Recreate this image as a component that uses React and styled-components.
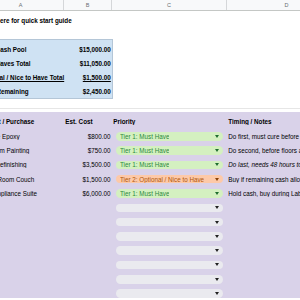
import styled, { createGlobalStyle } from "styled-components";

const COLS = "86px 48px 115px 120px";

const ITEMS = [
  { item: "Garage Epoxy", cost: "$800.00", tier: 1, note: "Do first, must cure before floors" },
  { item: "Bedroom Painting", cost: "$750.00", tier: 1, note: "Do second, before floors are done" },
  { item: "Floor Refinishing", cost: "$3,500.00", tier: 1, note: "Do last, needs 48 hours to cure", italic: true },
  { item: "Living Room Couch", cost: "$1,500.00", tier: 2, note: "Buy if remaining cash allows" },
  { item: "New Appliance Suite", cost: "$6,000.00", tier: 1, note: "Hold cash, buy during Labor Day" },
];

const EMPTY_ROWS = 7;

const TIERS = {
  0: { label: "", bg: "#eaeaef", fg: "#222", arrow: "#222" },
  1: { label: "Tier 1: Must Have", bg: "#d4f0c0", fg: "#2b8a3e", arrow: "#1f6e2f" },
  2: { label: "Tier 2: Optional / Nice to Have", bg: "#fdc9a8", fg: "#b0560a", arrow: "#8a4208" },
};

const GlobalStyle = createGlobalStyle`
  body {
    margin: 0;
    font-family: "Liberation Sans", Arial, sans-serif;
    overflow: hidden;
  }
`;

export default function App() {
  return (
    <>
      <GlobalStyle />
      <Viewport>
        <Sheet>
          <ColumnHeaders>
            {["A", "B", "C", "D"].map((l) => (
              <ColumnLetter key={l}>{l}</ColumnLetter>
            ))}
          </ColumnHeaders>

          <TitleRow>Click here for quick start guide</TitleRow>

          <SummaryBox>
            <SummaryRow label="Total Cash Pool" value="$15,000.00" />
            <SummaryRow label="Must Haves Total" value="$11,050.00" />
            <SummaryRow label="Optional / Nice to Have Total" value="$1,500.00" underline />
            <SummaryRow label="Cash Remaining" value="$2,450.00" />
          </SummaryBox>

          <Divider />

          <PlanSection>
            <PlanRow>
              <HeaderCell>Project / Purchase</HeaderCell>
              <HeaderCell>Est. Cost</HeaderCell>
              <HeaderCell>Priority</HeaderCell>
              <HeaderCell>Timing / Notes</HeaderCell>
            </PlanRow>
            {ITEMS.map((row) => (
              <PlanRow key={row.item}>
                <TextCell>{row.item}</TextCell>
                <CostCell>{row.cost}</CostCell>
                <PriorityCell>
                  <Dropdown tier={row.tier} />
                </PriorityCell>
                <TextCell $italic={row.italic}>{row.note}</TextCell>
              </PlanRow>
            ))}
            {Array.from({ length: EMPTY_ROWS }).map((_, i) => (
              <PlanRow key={i}>
                <TextCell />
                <CostCell />
                <PriorityCell>
                  <Dropdown tier={0} />
                </PriorityCell>
                <TextCell />
              </PlanRow>
            ))}
          </PlanSection>
        </Sheet>
      </Viewport>
    </>
  );
}

function SummaryRow({ label, value, underline }) {
  return (
    <SummaryLine $underline={underline}>
      <span>{label}</span>
      <span className="value">{value}</span>
    </SummaryLine>
  );
}

function Dropdown({ tier }) {
  const t = TIERS[tier];
  return (
    <Chip $bg={t.bg} $fg={t.fg}>
      <span className="label">{t.label}</span>
      <svg width="4" height="3" viewBox="0 0 4 3">
        <path d="M0 0 L4 0 L2 3 Z" fill={t.arrow} />
      </svg>
    </Chip>
  );
}

const Viewport = styled.div`
  width: 300px;
  height: 300px;
  overflow: hidden;
  background: #ffffff;
  font-size: 6.3px;
  color: #000;
`;

const Sheet = styled.div`
  margin-left: -22px;
  width: 369px;
`;

const ColumnHeaders = styled.div`
  display: grid;
  grid-template-columns: ${COLS};
  height: 11px;
  background: #f8f9fa;
  border-bottom: 1px solid #c4c7c5;
  box-sizing: border-box;
`;

const ColumnLetter = styled.div`
  display: flex;
  align-items: center;
  justify-content: center;
  color: #6b6f73;
  font-size: 5.5px;
  border-right: 1px solid #d5d7d9;
`;

const TitleRow = styled.div`
  height: 20px;
  line-height: 20px;
  padding-left: 1.3px;
  font-weight: bold;
  white-space: nowrap;
`;

const SummaryBox = styled.div`
  margin-top: 8px;
  width: 135px;
  box-sizing: border-box;
  padding-top: 3px;
  background: #cfe2f3;
  border: 1px solid #b4c6d7;
`;

const SummaryLine = styled.div`
  display: grid;
  grid-template-columns: 86px 47px;
  height: 13.75px;
  align-items: center;
  font-weight: bold;
  white-space: nowrap;
  padding-left: 0.3px;

  span {
    text-decoration: ${(p) => (p.$underline ? "underline" : "none")};
  }
  .value {
    text-align: right;
    padding-right: 1.5px;
  }
`;

const Divider = styled.div`
  margin-top: 9px;
  height: 1px;
  background: #e6e6e6;
`;

const PlanSection = styled.div`
  margin-top: 3px;
  height: 186px;
  overflow: hidden;
  box-sizing: border-box;
  padding-top: 2.85px;
  background: #d9d2e9;
`;

const PlanRow = styled.div`
  display: grid;
  grid-template-columns: ${COLS};
  height: 14.3px;
  align-items: center;
  white-space: nowrap;
`;

const HeaderCell = styled.div`
  font-weight: bold;
  text-decoration: underline;
  padding-left: 1.3px;
  overflow: hidden;
`;

const TextCell = styled.div`
  padding-left: 1.3px;
  font-style: ${(p) => (p.$italic ? "italic" : "normal")};
  overflow: hidden;
`;

const CostCell = styled.div`
  text-align: right;
  padding-right: 1.5px;
`;

const PriorityCell = styled.div`
  padding: 0 4px;
`;

const Chip = styled.div`
  display: flex;
  align-items: center;
  justify-content: space-between;
  height: 8.5px;
  border-radius: 5px;
  padding: 0 4px 0 4px;
  background: ${(p) => p.$bg};
  color: ${(p) => p.$fg};

  .label {
    overflow: hidden;
  }
  svg {
    flex: none;
  }
`;
